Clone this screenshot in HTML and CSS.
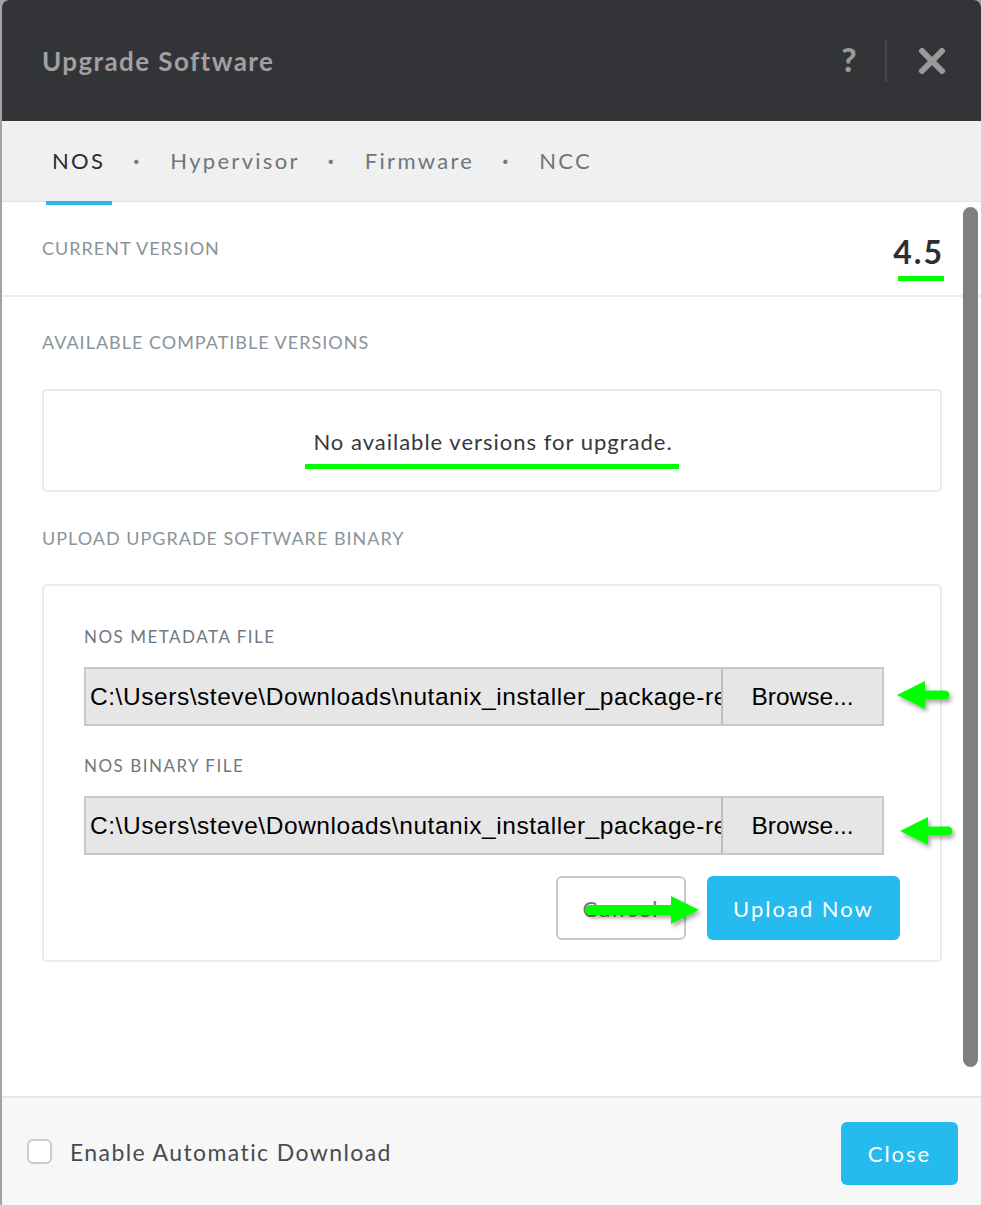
FILE: index.html
```html
<!DOCTYPE html>
<html>
<head>
<meta charset="utf-8">
<link rel="stylesheet" href="styles.css">
</head>
<body>
<div class="modal">
  <header class="mhead">
    <h1 class="title">Upgrade Software</h1>
    <div class="head-actions">
      <span class="help">?</span>
      <span class="vsep"></span>
      <svg class="xicon" width="28" height="28" viewBox="0 0 28 28"><path d="M4 4 L24 24 M24 4 L4 24" stroke="#9a9a9a" stroke-width="6" stroke-linecap="round"/></svg>
    </div>
  </header>
  <nav class="tabs">
    <span class="tab active">NOS</span>
    <span class="dot">·</span>
    <span class="tab">Hypervisor</span>
    <span class="dot">·</span>
    <span class="tab">Firmware</span>
    <span class="dot">·</span>
    <span class="tab">NCC</span>
  </nav>
  <main class="mbody">
    <div class="scrollbar"></div>
    <div class="current">
      <span class="label">CURRENT VERSION</span>
      <span class="ver">4.5<span class="hl hl-ver"></span></span>
    </div>
    <section class="sect">
      <div class="label">AVAILABLE COMPATIBLE VERSIONS</div>
      <div class="box empty">
        <span class="empty-text">No available versions for upgrade.<span class="hl hl-empty"></span></span>
      </div>
      <div class="label label-upload">UPLOAD UPGRADE SOFTWARE BINARY</div>
      <div class="box upload">
        <div class="sublabel">NOS METADATA FILE</div>
        <div class="file">
          <span class="path">C:\Users\steve\Downloads\nutanix_installer_package-release-danube-4.6</span>
          <span class="browse">Browse...</span>
          <svg class="arrow arrow-l1" width="62" height="40" viewBox="0 0 62 40"><defs><filter id="sh" x="-20%" y="-30%" width="150%" height="170%"><feDropShadow dx="2" dy="3" stdDeviation="2" flood-color="#000" flood-opacity="0.35"/></filter></defs><g filter="url(#sh)"><path d="M3 17 L31 3 L31 12.5 L51 12.5 A4.5 4.5 0 0 1 51 21.5 L31 21.5 L31 31 Z" fill="#00ff00"/></g></svg>
        </div>
        <div class="sublabel">NOS BINARY FILE</div>
        <div class="file">
          <span class="path">C:\Users\steve\Downloads\nutanix_installer_package-release-danube-4.6</span>
          <span class="browse">Browse...</span>
          <svg class="arrow arrow-l2" width="62" height="40" viewBox="0 0 62 40"><g filter="url(#sh)"><path d="M3 17 L31 3 L31 12.5 L51 12.5 A4.5 4.5 0 0 1 51 21.5 L31 21.5 L31 31 Z" fill="#00ff00"/></g></svg>
        </div>
        <div class="actions">
          <button class="btn cancel">Cancel</button>
          <button class="btn primary">Upload Now</button>
          <svg class="arrow arrow-r" width="124" height="44" viewBox="0 0 124 44"><g filter="url(#sh)"><path d="M5 15 L86 15 L86 6 L114 20 L86 34 L86 25 L5 25 A5 5 0 0 1 5 15 Z" fill="#00ff00"/></g></svg>
        </div>
      </div>
    </section>
  </main>
  <footer class="mfoot">
    <label class="check"><span class="cbox"></span>Enable Automatic Download</label>
    <button class="btn primary close">Close</button>
  </footer>
</div>
</body>
</html>
```
FILE: styles.css
```css
html, body { margin: 0; padding: 0; }
body {
  background: #a3a3a3;
  font-family: "Lato", "Open Sans", sans-serif;
  width: 981px;
  height: 1205px;
  overflow: hidden;
}
.modal {
  margin-left: 2px;
  width: 979px;
  height: 1205px;
  display: flex;
  flex-direction: column;
  background: #fff;
  border-radius: 7px 7px 0 0;
  overflow: hidden;
}
.mhead {
  height: 121px;
  flex: none;
  background: #333437;
  display: flex;
  align-items: center;
  justify-content: space-between;
  padding: 0 35px 0 40px;
}
.title {
  margin: 0;
  font-size: 26px;
  font-weight: 700;
  color: #a0a0a0;
  letter-spacing: 1.4px;
}
.head-actions { display: flex; align-items: center; }
.help {
  font-size: 33px;
  font-weight: 900;
  color: #9a9a9a;
  width: 24px;
  text-align: center;
  margin-top: -4px;
}
.vsep {
  width: 2px;
  height: 43px;
  background: #46484b;
  margin: 0 31px 0 24px;
}
.xicon { display: block; }

.tabs {
  height: 81px;
  flex: none;
  box-sizing: border-box;
  background: #f0f0f0;
  border-bottom: 1px solid #e3e3e3;
  display: flex;
  align-items: center;
  padding: 0 0 2px 42px;
  font-size: 22px;
  letter-spacing: 2.3px;
  color: #6d767d;
}
.tab {
  position: relative;
  padding: 0 6px 0 8px;
}
.tab.active { color: #2a2d30; }
.tab.active::after {
  content: "";
  position: absolute;
  left: 2px; right: -1px;
  bottom: -31px;
  height: 4px;
  background: #27b9ec;
}
.dot { margin: 0 23px 0 22px; font-weight: 700; color: #777; letter-spacing: 0; }

.mbody {
  flex: 1;
  position: relative;
  overflow: hidden;
}
.scrollbar {
  position: absolute;
  right: 3px;
  top: 5px;
  width: 15px;
  height: 860px;
  border-radius: 8px;
  background: #7f7f7f;
  z-index: 2;
}
.label {
  font-size: 18px;
  color: #8a9399;
  letter-spacing: 1px;
  line-height: 20px;
}
.current {
  height: 93px;
  border-bottom: 2px solid #ececec;
  display: flex;
  justify-content: space-between;
  align-items: center;
  padding: 0 37px 0 40px;
}
.current .label { margin-top: -1px; }
.ver {
  position: relative;
  font-size: 32px;
  font-weight: 700;
  color: #2c2e31;
  margin-top: 6px;
  letter-spacing: 2px;
}
.hl {
  position: absolute;
  background: #00ff00;
  height: 5px;
}
.hl-ver { left: 5px; right: 0px; bottom: -10px; }
.sect { padding: 35px 39px 0 40px; }
.box {
  border: 2px solid #ebebeb;
  border-radius: 5px;
  margin: 37px 0 36px;
}
.label-upload + .box { margin-top: 36px; }
.empty {
  height: 99px;
  display: flex;
  align-items: center;
  justify-content: center;
}
.empty-text {
  position: relative;
  font-size: 22px;
  color: #35383b;
  letter-spacing: 1px;
  margin-left: 2px;
  margin-top: 2px;
}
.hl-empty { left: -8px; right: -6px; bottom: -14px; }
.upload {
  padding: 41px 40px 20px 40px;
}
.sublabel {
  font-size: 17px;
  color: #6f7880;
  line-height: 20px;
  margin-bottom: 20px;
  letter-spacing: 1.5px;
}
.file {
  position: relative;
  width: 800px;
  height: 59px;
  box-sizing: border-box;
  display: flex;
  background: #e6e6e6;
  border: 2px solid #c8c8c8;
  margin-bottom: 30px;
  font-family: "Liberation Sans", Arial, sans-serif;
  font-size: 24.5px;
  color: #000;
}
.path {
  flex: 1;
  overflow: hidden;
  white-space: nowrap;
  padding-left: 4px;
  line-height: 55px;
  letter-spacing: 0.55px;
}
.browse {
  width: 159px;
  flex: none;
  border-left: 2px solid #bdbdbd;
  text-align: center;
  line-height: 55px;
}
.arrow { position: absolute; }
.arrow-l1 { left: 808px; top: 9px; }
.arrow-l2 { left: 811px; top: 16px; }
.upload .file + .sublabel + .file { margin-bottom: 21px; }
.actions {
  position: relative;
  display: flex;
  justify-content: flex-end;
  gap: 21px;
}
.btn {
  font-family: "Lato", "Open Sans", sans-serif;
  border-radius: 6px;
  font-size: 22px;
  letter-spacing: 2px;
  cursor: pointer;
}
.cancel {
  width: 130px;
  height: 64px;
  background: #fff;
  border: 2px solid #c2c9d0;
  color: #6d767d;
}
.primary {
  height: 64px;
  background: #26bbef;
  border: none;
  color: #fff;
}
.actions .primary { width: 193px; }
.arrow-r { left: 501px; top: 14px; }
.mfoot {
  height: 109px;
  flex: none;
  box-sizing: border-box;
  border-top: 2px solid #e8e8e8;
  background: #f7f7f7;
  display: flex;
  align-items: center;
  justify-content: space-between;
  padding: 0 23px 0 25px;
}
.check {
  display: flex;
  align-items: center;
  font-size: 23px;
  color: #474c52;
  letter-spacing: 1.4px;
}
.cbox {
  width: 21px;
  height: 21px;
  border: 2px solid #cbcbcb;
  border-radius: 6px;
  background: #fff;
  margin-right: 18px;
}
.close { width: 117px; height: 63px; margin-top: 4px; }
```
